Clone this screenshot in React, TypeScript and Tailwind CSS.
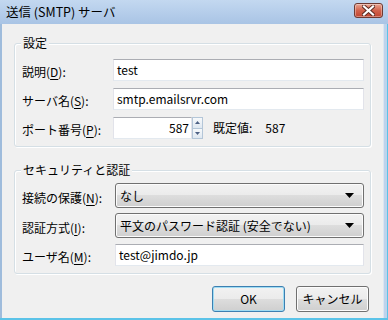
import React from 'react';

const font = { fontFamily: '"Noto Sans CJK JP", "Noto Sans", sans-serif' };

function Label({ text, keyChar, after }: { text: string; keyChar: string; after?: string }) {
  return (
    <span className="text-[12px] text-black whitespace-nowrap">
      {text}(<span className="underline underline-offset-2">{keyChar}</span>){after ?? ':'}
    </span>
  );
}

function TextBox({ value, className = '' }: { value: string; className?: string }) {
  return (
    <div
      className={`h-[22px] bg-white border border-[#abadb3] border-l-[#e2e3ea] border-r-[#e2e3ea] border-b-[#e3e9ef] flex items-center px-[3px] text-[12px] text-black ${className}`}
    >
      {value}
    </div>
  );
}

function Combo({ value }: { value: string }) {
  return (
    <div className="h-[25px] flex-1 rounded-[3px] border border-[#707070] bg-[linear-gradient(#f2f2f2,#ebebeb_50%,#dddddd_50%,#cfcfcf)] flex items-center pl-[4px] pr-[9px] shadow-[inset_0_0_0_1px_#fcfcfc]">
      <span className="flex-1 text-[12px] text-black">{value}</span>
      <svg width="9" height="5" viewBox="0 0 9 5">
        <path d="M0 0h9L4.5 5z" fill="#000" />
      </svg>
    </div>
  );
}

function Group({ title, className = '', children }: { title: string; className?: string; children: React.ReactNode }) {
  return (
    <div className={`relative mx-[12px] rounded-[3px] border border-[#d5dfe5] shadow-[inset_1px_1px_0_#fff,1px_1px_0_#fff] ${className}`}>
      <span className="absolute left-[6px] top-[-9px] bg-[#f0f0f0] px-[2px] text-[12px] leading-[16px] text-black">{title}</span>
      {children}
    </div>
  );
}

export default function App() {
  return (
    <div className="w-[388px] h-[320px] flex flex-col bg-[#bed3ec] overflow-hidden" style={font}>
      <div className="h-[24px] flex items-center pl-[6px] pr-[5px] bg-gradient-to-b from-[#c3d8f0] to-[#a9c4e5]">
        <span className="flex-1 text-[12.5px] text-black">送信 (SMTP) サーバ</span>
        <div className="w-[29px] h-[15px] mb-[4px] rounded-[3px] border border-[#6d3a33] bg-gradient-to-b from-[#e8a593] via-[#d2624c] to-[#c0442f] flex items-center justify-center shadow-[inset_0_0_0_1px_rgba(255,255,255,0.35)]">
          <svg width="13" height="11" viewBox="0 0 13 11">
            <path d="M2 1.5 L11 9.5 M11 1.5 L2 9.5" stroke="#5a2a22" strokeWidth="4" strokeLinecap="square" />
            <path d="M2 1.5 L11 9.5 M11 1.5 L2 9.5" stroke="#fff" strokeWidth="2.2" strokeLinecap="square" />
          </svg>
        </div>
      </div>
      <div className="flex-1 flex">
        <div className="w-[2px] bg-[#9fbcdc]" />
        <div className="flex-1 flex flex-col bg-[#f0f0f0] pt-[19px]">
          <Group title="設定" className="pt-[14px] pb-[6px] pl-[7px] pr-[6px]">
            <div className="flex flex-col gap-[5px]">
              <div className="flex items-center">
                <div className="w-[91px]"><Label text="説明" keyChar="D" /></div>
                <TextBox value="test" className="flex-1" />
              </div>
              <div className="flex items-center">
                <div className="w-[91px]"><Label text="サーバ名" keyChar="S" /></div>
                <TextBox value="smtp.emailsrvr.com" className="flex-1" />
              </div>
              <div className="flex items-center">
                <div className="w-[91px]"><Label text="ポート番号" keyChar="P" /></div>
                <TextBox value="587" className="w-[79px] justify-end pr-[2px]" />
                <div className="w-[11px] h-[22px] flex flex-col">
                  <div className="flex-1 border border-[#b4c6d8] bg-gradient-to-b from-[#f7f9fb] to-[#dfe8f1] flex items-center justify-center">
                    <svg width="5" height="3" viewBox="0 0 5 3"><path d="M0 3h5L2.5 0z" fill="#4d6185" /></svg>
                  </div>
                  <div className="flex-1 border border-t-0 border-[#b4c6d8] bg-gradient-to-b from-[#f7f9fb] to-[#dfe8f1] flex items-center justify-center">
                    <svg width="5" height="3" viewBox="0 0 5 3"><path d="M0 0h5L2.5 3z" fill="#4d6185" /></svg>
                  </div>
                </div>
                <span className="ml-[10px] text-[12px] text-black">既定値:</span>
                <span className="ml-[13px] text-[12px] text-black">587</span>
              </div>
            </div>
          </Group>
          <Group title="セキュリティと認証" className="mt-[23px] pt-[12px] pb-[6px] pl-[7px] pr-[6px]">
            <div className="flex flex-col gap-[5px]">
              <div className="flex items-center">
                <div className="w-[93px]"><Label text="接続の保護" keyChar="N" /></div>
                <Combo value="なし" />
              </div>
              <div className="flex items-center">
                <div className="w-[93px]"><Label text="認証方式" keyChar="I" /></div>
                <Combo value="平文のパスワード認証 (安全でない)" />
              </div>
              <div className="flex items-center">
                <div className="w-[93px]"><Label text="ユーザ名" keyChar="M" /></div>
                <TextBox value="test@jimdo.jp" className="flex-1" />
              </div>
            </div>
          </Group>
          <div className="flex justify-end gap-[11px] mt-[12px] pr-[14px]">
            <button className="w-[73px] h-[26px] rounded-[3px] border border-[#3c7fb1] bg-[linear-gradient(#f2f2f2,#ebebeb_50%,#dddddd_50%,#cfcfcf)] shadow-[inset_0_0_0_1px_#9fdcf3] text-[12px] text-black">
              OK
            </button>
            <button className="w-[73px] h-[26px] rounded-[3px] border border-[#707070] bg-[linear-gradient(#f2f2f2,#ebebeb_50%,#dddddd_50%,#cfcfcf)] shadow-[inset_0_0_0_1px_#fcfcfc] text-[12px] text-black">
              キャンセル
            </button>
          </div>
        </div>
        <div className="w-[5px] flex">
          <div className="w-[1px] bg-[#dbe6f3]" />
          <div className="flex-1 bg-[#bed3ec]" />
          <div className="w-[1px] bg-[#5bc3e8]" />
        </div>
      </div>
      <div className="h-[2px] bg-[#5bc3e8]" />
    </div>
  );
}
